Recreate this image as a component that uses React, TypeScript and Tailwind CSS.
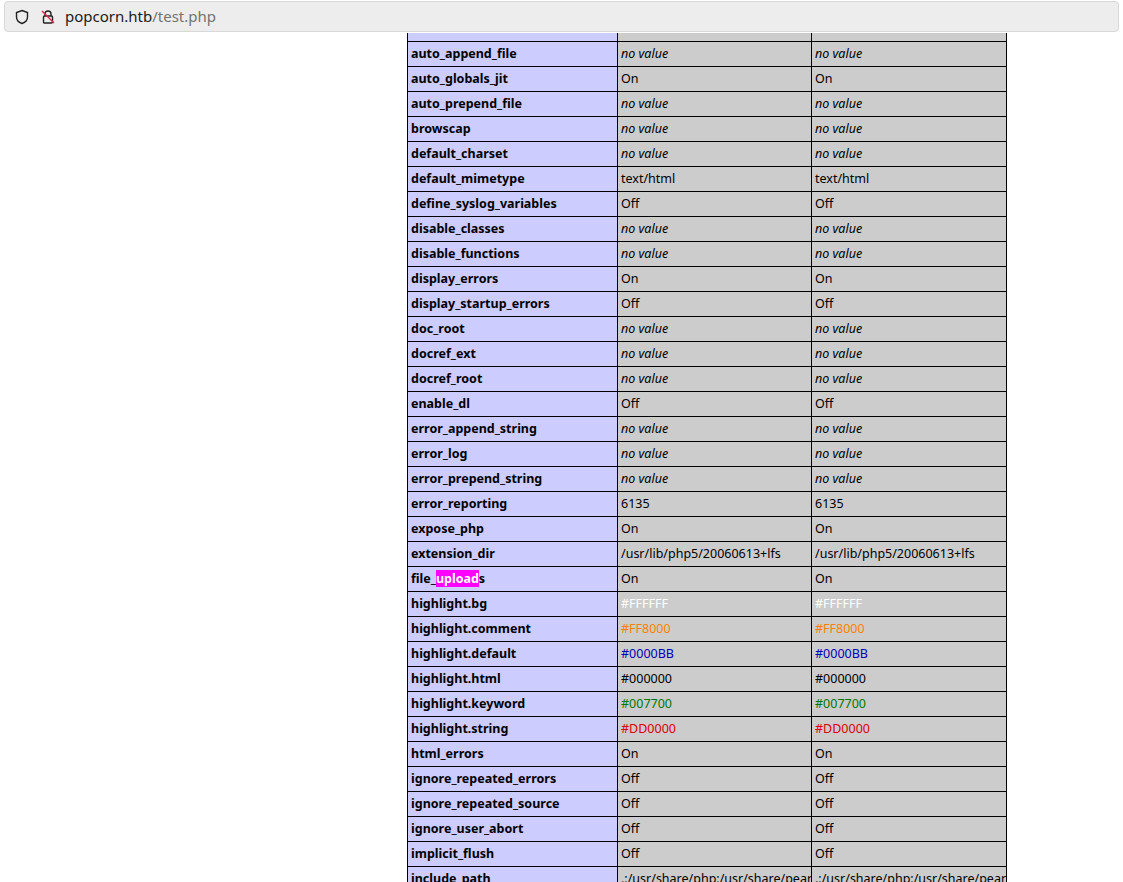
import React from "react";

type V = { t: string; i?: boolean; c?: string };
const rows: [React.ReactNode, V][] = [
  ["auto_append_file", { t: "no value", i: true }],
  ["auto_globals_jit", { t: "On" }],
  ["auto_prepend_file", { t: "no value", i: true }],
  ["browscap", { t: "no value", i: true }],
  ["default_charset", { t: "no value", i: true }],
  ["default_mimetype", { t: "text/html" }],
  ["define_syslog_variables", { t: "Off" }],
  ["disable_classes", { t: "no value", i: true }],
  ["disable_functions", { t: "no value", i: true }],
  ["display_errors", { t: "On" }],
  ["display_startup_errors", { t: "Off" }],
  ["doc_root", { t: "no value", i: true }],
  ["docref_ext", { t: "no value", i: true }],
  ["docref_root", { t: "no value", i: true }],
  ["enable_dl", { t: "Off" }],
  ["error_append_string", { t: "no value", i: true }],
  ["error_log", { t: "no value", i: true }],
  ["error_prepend_string", { t: "no value", i: true }],
  ["error_reporting", { t: "6135" }],
  ["expose_php", { t: "On" }],
  ["extension_dir", { t: "/usr/lib/php5/20060613+lfs" }],
  [<>file_<span className="bg-[#ff00ff] text-white">upload</span>s</>, { t: "On" }],
  ["highlight.bg", { t: "#FFFFFF", c: "text-[#ffffff]" }],
  ["highlight.comment", { t: "#FF8000", c: "text-[#ff8000]" }],
  ["highlight.default", { t: "#0000BB", c: "text-[#0000bb]" }],
  ["highlight.html", { t: "#000000", c: "text-[#000000]" }],
  ["highlight.keyword", { t: "#007700", c: "text-[#007700]" }],
  ["highlight.string", { t: "#DD0000", c: "text-[#dd0000]" }],
  ["html_errors", { t: "On" }],
  ["ignore_repeated_errors", { t: "Off" }],
  ["ignore_repeated_source", { t: "Off" }],
  ["ignore_user_abort", { t: "Off" }],
  ["implicit_flush", { t: "Off" }],
  ["include_path", { t: ".:/usr/share/php:/usr/share/pear" }],
];

function Val({ v }: { v: V }) {
  return (
    <td className={`border border-black bg-[#cccccc] px-[3px] h-[25px] whitespace-nowrap overflow-hidden max-w-0 ${v.i ? "italic" : ""} ${v.c ?? ""}`}>
      {v.t}
    </td>
  );
}

export default function App() {
  return (
    <div className="h-[882px] overflow-hidden bg-white text-black" style={{ fontFamily: '"Noto Sans", sans-serif' }}>
      <div className="h-[33px] px-[4px] pt-[1px]">
        <div className="h-[31px] rounded-[4px] bg-[#ededed] border border-[#d8d8d8] flex items-center text-[15px]">
          <svg width="16" height="16" viewBox="0 0 16 16" className="ml-[9px]" fill="none" stroke="#222" strokeWidth="1.4">
            <path d="M8 1.5 L13.5 3.5 V8 C13.5 11 11 13.5 8 14.5 C5 13.5 2.5 11 2.5 8 V3.5 Z" />
          </svg>
          <svg width="16" height="16" viewBox="0 0 16 16" className="ml-[10px]" fill="none" strokeWidth="1.4">
            <path d="M5 7 V5 a3 3 0 0 1 6 0 V7" stroke="#222" />
            <rect x="3.5" y="7" width="9" height="7" rx="1" stroke="#222" />
            <path d="M2 2 L14 14" stroke="#e22850" />
          </svg>
          <span className="ml-[9px] text-[#1a1a1a]">popcorn.htb<span className="text-[#737373]">/test.php</span></span>
        </div>
      </div>
      <div className="pl-[407px]">
        <table className="border-collapse text-[12.5px] leading-[18px] table-fixed w-[600px]">
          <colgroup>
            <col className="w-[210px]" />
            <col className="w-[194px]" />
            <col className="w-[195px]" />
          </colgroup>
          <tbody>
            <tr>
              <td className="border border-black border-t-0 bg-[#ccccff] h-[8px]"></td>
              <td className="border border-black border-t-0 bg-[#cccccc] h-[8px]"></td>
              <td className="border border-black border-t-0 bg-[#cccccc] h-[8px]"></td>
            </tr>
            {rows.map(([k, v], i) => (
              <tr key={i}>
                <td className="border border-black bg-[#ccccff] px-[3px] h-[25px] font-bold whitespace-nowrap">{k}</td>
                <Val v={v} />
                <Val v={v} />
              </tr>
            ))}
          </tbody>
        </table>
      </div>
    </div>
  );
}
